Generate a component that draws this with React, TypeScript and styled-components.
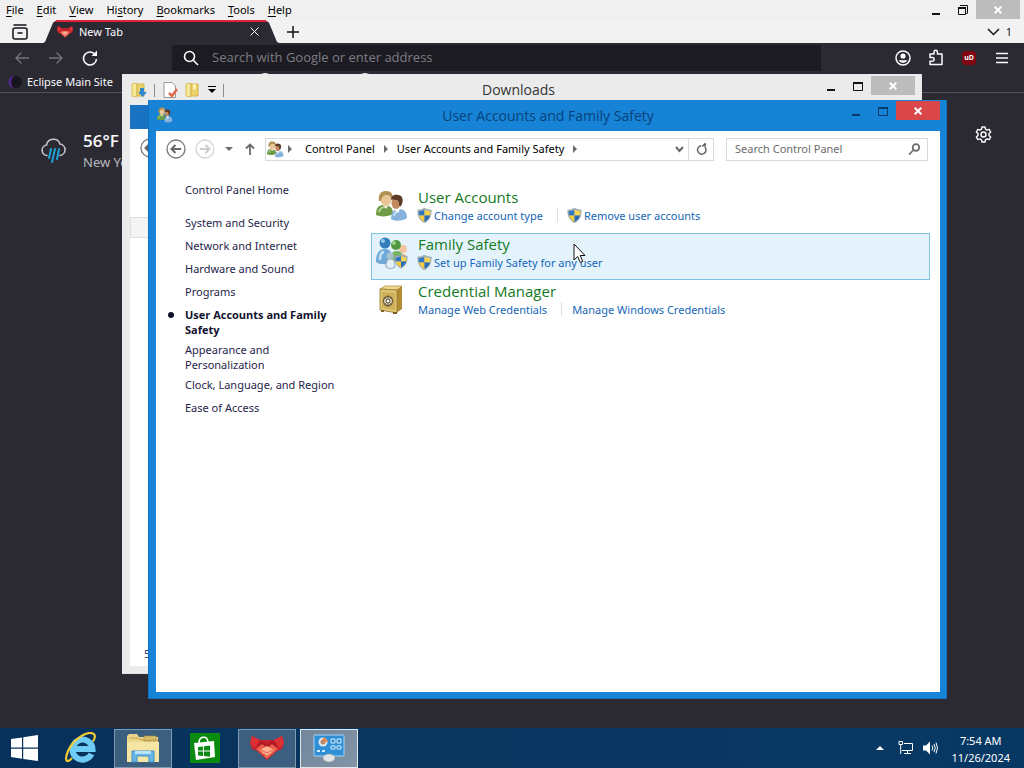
import React from "react";
import styled, { createGlobalStyle, css } from "styled-components";

const uiFont = `"Noto Sans", "Open Sans", sans-serif`;
const headingFont = `"Open Sans", "Noto Sans", sans-serif`;

const GlobalStyle = createGlobalStyle`
  * { box-sizing: border-box; }
  html, body { margin: 0; padding: 0; overflow: hidden; }
  body { font-family: ${uiFont}; font-size: 11px; line-height: 15px; color: #000; }
  button, input { font: inherit; color: inherit; background: none; border: 0; padding: 0; margin: 0; }
  ul { list-style: none; margin: 0; padding: 0; }
  h1, h2, p { margin: 0; font-weight: 400; }
  h1, h2 { font-family: ${headingFont}; }
  a { text-decoration: none; color: inherit; }
  svg { display: block; flex: none; }
`;

const Desktop = styled.div`
  position: relative;
  display: flex;
  flex-direction: column;
  height: 100vh;
  overflow: hidden;
  background: #2b2a33;
`;

/* ---------- shared ---------- */
const IconButton = styled.button<{ $w?: number; $color?: string }>`
  display: flex;
  align-items: center;
  justify-content: center;
  flex: none;
  width: ${(p) => p.$w ?? 20}px;
  height: 20px;
  color: ${(p) => p.$color ?? "inherit"};
`;

const Controls = styled.div`
  display: flex;
  justify-content: flex-end;
  height: 20px;
`;

const CloseButton = styled(IconButton)<{ $bg: string }>`
  width: 44px;
  height: 19px;
  color: #fff;
  background: ${(p) => p.$bg};
`;

function WindowControls({ color, closeBg, restore }: { color: string; closeBg: string; restore?: boolean }) {
  return (
    <Controls>
      <IconButton $w={27} $color={color} aria-label="Minimize">
        <svg width="8" height="14"><path d="M0 10h8v2H0z" fill="currentColor" /></svg>
      </IconButton>
      <IconButton $w={27} $color={color} aria-label={restore ? "Restore" : "Maximize"}>
        {restore ? (
          <svg width="12" height="12" fill="none" stroke="currentColor">
            <path d="M1.500 4v6.500h7V4M10.500 9V1.500H3M9 9.500h1.500" /><path d="M1 4h8" strokeWidth="2" />
          </svg>
        ) : (
          <svg width="10" height="9" fill="none" stroke="currentColor"><path d="M.5 1v7.500h9V1" /><path d="M0 1h10" strokeWidth="2" /></svg>
        )}
      </IconButton>
      <CloseButton $bg={closeBg} aria-label="Close">
        <svg width="8" height="8" stroke="currentColor" strokeWidth="2"><path d="M.7.7l6.600 6.600M7.300.7L.7 7.300" /></svg>
      </CloseButton>
    </Controls>
  );
}

/* ---------- browser ---------- */
const Browser = styled.main`
  flex: 1;
  display: flex;
  flex-direction: column;
  min-height: 0;
  color: #fbfbfe;
`;

const MenuBar = styled.header`
  display: flex;
  justify-content: space-between;
  height: 20px;
  padding-right: 4px;
  background: #f0f0f0;
  color: #000;
`;

const Menus = styled.nav`
  display: flex;
  align-items: center;
  gap: 13px;
  padding: 0 0 2px 6px;
  u { text-underline-offset: 2px; }
`;

const TabStrip = styled.div`
  display: flex;
  align-items: center;
  height: 23px;
  padding: 0 12px 0 10px;
  background: #f2f2f3;
  color: #15141a;
`;

const Tab = styled.div`
  display: flex;
  align-items: center;
  width: 236px;
  height: 23px;
  margin: 0 4px 0 13px;
  padding: 0 15px 2px 14px;
  border-top: 2px solid #e0243f;
  background: #2b2a33;
  color: #fbfbfe;
  clip-path: polygon(0 100%, 2px 96%, 10px 12%, 14px 0, 222px 0, 226px 12%, 234px 96%, 100% 100%);
  span { flex: 1; padding-left: 6px; }
`;

const Spacer = styled.div`
  flex: 1;
`;

const TabCount = styled.button`
  display: flex;
  align-items: center;
  gap: 6px;
`;

const NavBar = styled.div`
  display: flex;
  align-items: center;
  height: 29px;
  padding: 0 12px;
  background: #2b2a33;
`;

const NavGroup = styled.div<{ $gap: number }>`
  display: flex;
  align-items: center;
  gap: ${(p) => p.$gap}px;
`;

const UrlBar = styled.label`
  flex: 1;
  display: flex;
  align-items: center;
  gap: 13px;
  height: 26px;
  margin: 0 72px;
  padding: 0 11px;
  background: #1c1b22;
  input { flex: 1; min-width: 0; font-family: ${headingFont}; font-size: 13px; outline: 0; }
  input::placeholder { color: #7d7c84; opacity: 1; }
`;

const ExtensionBadge = styled.span`
  display: grid;
  place-items: center;
  width: 14px;
  height: 14px;
  border-radius: 4px;
  background: #800610;
  font-size: 7px;
  line-height: 8px;
  font-weight: 700;
`;

const BookmarksBar = styled.div`
  display: flex;
  align-items: center;
  gap: 82px;
  height: 21px;
  padding-left: 7px;
  border-bottom: 1px solid #55545c;
  a { display: flex; align-items: center; gap: 4px; width: 167px; padding-bottom: 1px; }
`;

const Favicon = styled.span`
  width: 18px;
  height: 18px;
  border-radius: 50%;
  background: #fbfbfe;
`;

const NewTabPage = styled.section`
  display: flex;
  align-items: flex-start;
  justify-content: space-between;
  padding: 31px 32px 0 40px;
`;

const Weather = styled.div`
  display: flex;
  align-items: center;
  gap: 16px;
  height: 53px;
  strong { display: block; font-family: ${headingFont}; font-size: 17px; line-height: 22px; font-weight: 600; }
  p { font-size: 13px; line-height: 20px; color: #b8b8bf; white-space: nowrap; }
`;

/* ---------- windows ---------- */
const DownloadsWindow = styled.section`
  position: absolute;
  top: 74px;
  right: 102px;
  bottom: 94px;
  left: 122px;
  display: flex;
  flex-direction: column;
  padding: 2px 6px 7px 8px;
  background: #ebebeb;
  border: 1px solid #e2e2e4;
  border-width: 0 1px 1px 0;
`;

const TitleRow = styled.header<{ $h: number }>`
  display: grid;
  grid-template-columns: 1fr auto 1fr;
  height: ${(p) => p.$h}px;
  flex: none;
  h1 { font-size: 14px; line-height: 28px; color: #333; padding-right: 8px; }
`;

const QuickAccess = styled.div`
  display: flex;
  align-items: center;
  height: 28px;
  gap: 7px;
  padding-left: 1px;
`;

const Divider = styled.span<{ $h: number; $color: string }>`
  flex: none;
  width: 1px;
  height: ${(p) => p.$h}px;
  background: ${(p) => p.$color};
`;

const Ribbon = styled.div`
  height: 24px;
  flex: none;
  background: #1a72c2;
`;

const DownloadsBody = styled.div`
  flex: 1;
  display: flex;
  flex-direction: column;
  padding-top: 9px;
  background: #fff;
`;

const BackRow = styled.div`
  padding-left: 10px;
  height: 79px;
`;

const ColumnStub = styled.div`
  height: 21px;
  border: 1px solid #ddd;
  background: #f4f4f4;
`;

const StatusLine = styled.p`
  margin-top: auto;
  padding: 0 0 5px 14px;
  color: #1d3c66;
`;

const PanelWindow = styled.section`
  position: absolute;
  top: 100px;
  right: 77px;
  bottom: 69px;
  left: 148px;
  display: flex;
  flex-direction: column;
  padding: 1px 6px 6px 7px;
  background: #1783d6;
  border: 1px solid #1173bf;
  border-top: 0;
`;

const PanelTitle = styled(TitleRow)`
  h1 { line-height: 30px; color: #08427a; padding: 0; }
`;

const TitleIcon = styled.div`
  padding: 6px 0 0 1px;
`;

const PanelBody = styled.div`
  flex: 1;
  display: flex;
  flex-direction: column;
  background: #fff;
`;

const AddressRow = styled.nav`
  display: flex;
  align-items: center;
  height: 36px;
  padding: 0 12px 0 9px;
  color: #6b6b6b;
`;

const fieldBox = css`
  display: flex;
  align-items: center;
  height: 23px;
  border: 1px solid #d9d9d9;
`;

const Address = styled.div`
  ${fieldBox}
  flex: 1;
  margin-right: 12px;
  padding-left: 1px;
  color: #000;
`;

const Crumb = styled.button`
  padding: 0 9px 1px;
  white-space: nowrap;
`;

const SearchField = styled.label`
  ${fieldBox}
  width: 202px;
  padding: 0 6px 0 8px;
  input { flex: 1; min-width: 0; padding-bottom: 1px; outline: 0; }
  input::placeholder { color: #6d6d6d; opacity: 1; }
`;

const Columns = styled.div`
  display: flex;
  flex: 1;
  padding: 15px 10px 0 11px;
`;

const Sidebar = styled.aside`
  flex: none;
  width: 204px;
  padding-left: 18px;
  color: #1e1e4b;
  > a { display: block; margin-bottom: 17px; }
  ul { display: flex; flex-direction: column; gap: 3px; width: 160px; }
`;

const SideItem = styled.li<{ $active?: boolean; $narrow?: boolean }>`
  min-height: 20px;
  padding: 1px 0;
  padding-right: ${(p) => (p.$narrow ? 40 : 0)}px;
  ${(p) =>
    p.$active &&
    css`
      display: flex;
      margin-left: -18px;
      font-family: ${headingFont};
      font-weight: 700;
      color: #11112e;
      &::before {
        content: "";
        flex: none;
        width: 6px;
        height: 6px;
        margin: 5px 11px 0 1px;
        border-radius: 50%;
        background: #11112e;
      }
    `}
`;

const Categories = styled.ul`
  flex: 1;
  padding-top: 4px;
`;

const Category = styled.li<{ $hover?: boolean }>`
  display: flex;
  gap: 10px;
  height: 47px;
  padding: 1px 4px;
  border: 1px solid ${(p) => (p.$hover ? "#7cc3e6" : "transparent")};
  background: ${(p) => (p.$hover ? "#e4f3fb" : "none")};
  > svg { margin-top: 2px; }
  h2 { font-size: 15px; line-height: 18px; color: #147a1c; }
`;

const Links = styled.div`
  display: flex;
  align-items: center;
  height: 18px;
  color: #1566b8;
  a { display: flex; align-items: center; gap: 2px; white-space: nowrap; }
  a > svg { margin-left: -1px; }
`;

const LinkDivider = styled(Divider)`
  margin: 0 10px 0 14px;
`;

const Pointer = styled.div`
  position: absolute;
  top: 243px;
  left: 573px;
  pointer-events: none;
`;

/* ---------- taskbar ---------- */
const Taskbar = styled.footer`
  display: flex;
  flex: none;
  align-items: center;
  gap: 4px;
  height: 40px;
  padding-right: 14px;
  background: linear-gradient(90deg, #07305a, #0a3761 50%, #073864);
  color: #fff;
`;

const TaskButton = styled.button<{ $state?: "open" | "active"; $start?: boolean }>`
  display: grid;
  place-items: center;
  width: ${(p) => (p.$start ? 48 : 58)}px;
  height: 39px;
  border: 1px solid transparent;
  ${(p) => p.$state === "open" && "background:#3c5f80;border-color:#8199ae;"}
  ${(p) => p.$state === "active" && "background:linear-gradient(135deg,#72869b,#8294a6);border-color:#e0e7ed;"}
`;

const Clock = styled.div`
  margin-left: 7px;
  padding-top: 1px;
  text-align: center;
  line-height: 17px;
`;

/* ---------- icons ---------- */
const Shield = () => (
  <svg width="15" height="15" viewBox="0 0 15 15">
    <path d="M7.500 0C5.500 1.500 3 2 .8 2c0 6 1.500 10 6.700 13 5.200-3 6.700-7 6.700-13-2.200 0-4.700-.5-6.700-2z" fill="#a8b5bc" stroke="#8c9aa3" strokeWidth=".6" />
    <path d="M7.500 1.500V7.500H2C1.800 6 1.700 4.500 1.800 3.200 4 3 6 2.500 7.500 1.500z" fill="#2f75c2" />
    <path d="M7.500 1.500V7.500H13c.2-1.500.3-3 .2-4.300C11 3 9 2.500 7.500 1.500z" fill="#f6d44c" />
    <path d="M2 7.500h5.500v6.300C4.300 12 2.600 10 2 7.500z" fill="#f4cb3c" />
    <path d="M13 7.500H7.500v6.300C10.700 12 12.400 10 13 7.500z" fill="#286bb6" />
  </svg>
);

const Users = ({ size = 32 }: { size?: number }) => (
  <svg width={size} height={size} viewBox="0 0 32 32">
    <path d="M0 25c0-8 3-10 8-10s9 2 9 9c-5 3-13 3-17 1z" fill="#6f9b46" />
    <path d="M3 22c1-4 3-5 6-5" fill="none" stroke="#b4cf92" strokeWidth="2" />
    <path d="M7 15l3 4 3-4z" fill="#f3ead6" />
    <ellipse cx="10" cy="9" rx="5.500" ry="7" fill="#e8c697" />
    <path d="M3 11C2 4 5 1 10 1s8 3 6 9c-1-3-2-5-5-5S6 6 5 11z" fill="#b28f52" />
    <path d="M15 29c0-7 3-10 8-10s8 3 8 9c-4 3-12 4-16 1z" fill="#86b3dd" />
    <path d="M18 26c1-4 3-5 5-5" fill="none" stroke="#c4def3" strokeWidth="2" />
    <ellipse cx="20" cy="13" rx="4.500" ry="6" fill="#c48a5f" />
    <path d="M15 10c0-5 4-6 7-5 5 0 6 6 3 11-1 1-2 0-2-2 0-3-1-4-3-4s-4-1-5 0z" fill="#5c3b2a" />
    <path d="M18 19l4 4 2-4" fill="#fff" />
  </svg>
);

const Family = () => (
  <svg width="32" height="32" viewBox="0 0 32 32">
    <circle cx="27" cy="12" r="4" fill="#f5c5a0" /><path d="M22 27c0-7 1-10 5-10s4 4 4 8z" fill="#f3b486" />
    <circle cx="20" cy="8" r="5" fill="#4f9a3f" /><path d="M14 25c0-8 2-11 7-11s6 4 6 9z" fill="#7ab364" />
    <circle cx="18" cy="6" r="2" fill="#9dd089" />
    <circle cx="9" cy="6" r="5.500" fill="#347ebd" /><path d="M0 25c0-9 3-13 9-13s7 4 7 13c-4 3-12 3-16 0z" fill="#6fa9da" />
    <circle cx="7" cy="4" r="2" fill="#93c8ef" /><path d="M4 23c0-5 1-8 4-8" fill="none" stroke="#c2e0f6" strokeWidth="2.500" />
    <circle cx="14" cy="19" r="3.500" fill="#a9c0d0" /><path d="M10 30c0-6 1-8 4.500-8s4.500 2 4.500 8c-3 2-6 2-9 0z" fill="#e3ecf2" stroke="#8ba5b7" />
    <svg x="18" y="17" width="14" height="15" viewBox="0 0 15 15"><Shield /></svg>
  </svg>
);

const Safe = () => (
  <svg width="32" height="32" viewBox="0 0 32 32">
    <path d="M4 5l5-3h17l-4 4z" fill="#efd98a" stroke="#a78a3a" strokeWidth=".7" />
    <path d="M20 6l6-4v23l-6 4z" fill="#b08d35" />
    <path d="M4 5l17 1v23L4 26z" fill="#dfc673" stroke="#94772f" strokeWidth=".8" />
    <path d="M6 8l13 1v17L6 24z" fill="#cfb05a" />
    <circle cx="12" cy="17" r="4.500" fill="#e6dfc9" stroke="#6b5a38" strokeWidth="1.300" />
    <path d="M8 13l8 8M16 13l-8 8M12 11v12" stroke="#6b5a38" strokeWidth=".8" /><circle cx="12" cy="17" r="2" fill="#fff" stroke="#57482a" />
    <path d="M5 26v2h3v-2M17 28v2h4v-2" fill="#7a6226" />
  </svg>
);

const Fox = ({ w, h }: { w: number; h: number }) => (
  <svg width={w} height={h} viewBox="0 0 34 24">
    <path d="M2 0l8 4h14l8-4 2 7-2 6-5 2-10 9-10-9-5-2-2-6z" fill="#c8202c" />
    <path d="M2 0l8 4-6 8-4-5zM32 0l-8 4 6 8 4-5z" fill="#dc3034" />
    <path d="M10 4l7 4 7-4 3 8-10 4-10-4z" fill="#b01b27" />
    <path d="M6 13l6-5 5 4 5-4 6 5-11 10z" fill="#ea5f4c" />
    <path d="M10 14l7-4 7 4-7 7z" fill="#ffb292" /><path d="M11 14l6 3 6-3M14 18l3 2 3-2" fill="none" stroke="#e2604f" />
  </svg>
);

const Folder = ({ kind }: { kind?: "down" }) => (
  <svg width="16" height="16" viewBox="0 0 16 16">
    <path d="M1 2l5-1v14l-5-1z" fill="#f7e99a" stroke="#d9c05c" /><path d="M6 2h7v12H6z" fill="#ecd068" stroke="#d0b24a" />
    {kind ? <path d="M9 6h4v4h3l-4.500 5L7 10h2z" fill="#2f87cf" /> : <path d="M8 2v6l3-1V2z" fill="#fbf0b4" />}
  </svg>
);

const CircleArrow = ({ flip, color, ring }: { flip?: boolean; color: string; ring: string }) => (
  <svg width="20" height="20" viewBox="0 0 20 20" fill="none">
    <circle cx="10" cy="10" r="9" stroke={ring} strokeWidth="1.300" />
    <path d={flip ? "M5 10h9M10.500 6l4 4-4 4" : "M15 10H6M9.500 6l-4 4 4 4"} stroke={color} strokeWidth="2" />
  </svg>
);

const Chevron = () => (
  <svg width="4" height="8"><path d="M0 0l4 4-4 4z" fill="#6b6b6b" /></svg>
);

const menus: [string, string, string][] = [
  ["", "F", "ile"], ["", "E", "dit"], ["", "V", "iew"], ["Hi", "s", "tory"], ["", "B", "ookmarks"], ["", "T", "ools"], ["", "H", "elp"],
];

const sideItems = [
  "System and Security", "Network and Internet", "Hardware and Sound", "Programs", "User Accounts and Family Safety",
  "Appearance and Personalization", "Clock, Language, and Region", "Ease of Access",
];

const categories = [
  { name: "User Accounts", icon: <Users />, links: ["Change account type", "Remove user accounts"], shield: true },
  { name: "Family Safety", icon: <Family />, links: ["Set up Family Safety for any user"], shield: true, hover: true },
  { name: "Credential Manager", icon: <Safe />, links: ["Manage Web Credentials", "Manage Windows Credentials"] },
];

export default function App() {
  return (
    <Desktop>
      <GlobalStyle />
      <Browser>
        <MenuBar>
          <Menus>
            {menus.map(([a, k, b]) => (
              <button key={k + b}>{a}<u>{k}</u>{b}</button>
            ))}
          </Menus>
          <WindowControls color="#111" closeBg="#bcbcbc" restore />
        </MenuBar>
        <TabStrip>
          <IconButton aria-label="Recent browsing">
            <svg width="16" height="16" viewBox="0 0 16 16" fill="none" stroke="currentColor" strokeWidth="1.500" strokeLinecap="round">
              <path d="M2 1h12M6 9h4" /><rect x="1" y="4" width="14" height="11" rx="2" />
            </svg>
          </IconButton>
          <Tab>
            <Fox w={16} h={12} />
            <span>New Tab</span>
            <IconButton aria-label="Close tab">
              <svg width="9" height="9" stroke="currentColor"><path d="M.5.5l8 8M8.500.5l-8 8" /></svg>
            </IconButton>
          </Tab>
          <IconButton aria-label="New tab">
            <svg width="12" height="12" stroke="currentColor" strokeWidth="1.500"><path d="M6 0v12M0 6h12" /></svg>
          </IconButton>
          <Spacer />
          <TabCount aria-label="List all tabs">
            <svg width="13" height="8" fill="none" stroke="currentColor" strokeWidth="1.500"><path d="M1 1l5.500 5.500L12 1" /></svg>
            1
          </TabCount>
        </TabStrip>
        <NavBar>
          <NavGroup $gap={14}>
            <IconButton $color="#75747b" aria-label="Back">
              <svg width="14" height="12" fill="none" stroke="currentColor" strokeWidth="1.300"><path d="M14 6H1M6.500.5L1 6l5.500 5.500" /></svg>
            </IconButton>
            <IconButton $color="#75747b" aria-label="Forward">
              <svg width="14" height="12" fill="none" stroke="currentColor" strokeWidth="1.300"><path d="M0 6h13M7.500.5L13 6l-5.500 5.500" /></svg>
            </IconButton>
            <IconButton aria-label="Reload">
              <svg width="16" height="16" viewBox="0 0 16 16" fill="none" stroke="currentColor" strokeWidth="1.600"><path d="M13.500 5A6.500 6.500 0 1 0 14.500 9" /><path d="M15 .5V6H9.500z" fill="currentColor" stroke="none" /></svg>
            </IconButton>
          </NavGroup>
          <UrlBar>
            <svg width="16" height="16" viewBox="0 0 16 16" fill="none" stroke="currentColor" strokeWidth="1.600"><circle cx="6.500" cy="6.500" r="5" /><path d="M10.300 10.300L15 15" /></svg>
            <input aria-label="Address" placeholder="Search with Google or enter address" />
          </UrlBar>
          <NavGroup $gap={13}>
            <IconButton aria-label="Account">
              <svg width="16" height="16" viewBox="0 0 16 16"><circle cx="8" cy="8" r="7" fill="none" stroke="currentColor" strokeWidth="1.500" /><circle cx="8" cy="6" r="2.600" fill="currentColor" /><path d="M3.500 10.300h9A5 5 0 0 1 8 13a5 5 0 0 1-4.500-2.700z" fill="currentColor" /></svg>
            </IconButton>
            <IconButton aria-label="Extensions">
              <svg width="16" height="17" viewBox="0 0 16 17" fill="none" stroke="currentColor" strokeWidth="1.500" strokeLinejoin="round"><path d="M2 5h4V3a1.700 1.700 0 0 1 3.400 0v2H14v10.500H2v-3.300h2.300a1.800 1.800 0 0 0 0-3.600H2z" /></svg>
            </IconButton>
            <IconButton aria-label="uBlock Origin"><ExtensionBadge>uD</ExtensionBadge></IconButton>
            <IconButton aria-label="Menu">
              <svg width="12" height="12" stroke="currentColor" strokeWidth="1.500"><path d="M0 1.500h12M0 6h12M0 10.500h12" /></svg>
            </IconButton>
          </NavGroup>
        </NavBar>
        <BookmarksBar>
          <a href="#eclipse">
            <svg width="16" height="16" viewBox="0 0 16 16"><circle cx="9" cy="8" r="6" fill="#17131f" /><path d="M6 2a6.500 6.500 0 0 0 0 12A9 9 0 0 1 6 2z" fill="#6b2fa5" stroke="#4a2384" /></svg>
            Eclipse Main Site
          </a>
          <Favicon /><Favicon />
        </BookmarksBar>
        <NewTabPage>
          <Weather>
            <svg width="27" height="26" viewBox="0 0 27 26" fill="none" strokeLinecap="round">
              <path d="M7 17.500a5.300 5.300 0 0 1-.5-10.500 7 7 0 0 1 13.500-1 5.800 5.800 0 0 1 0 11.500" stroke="#c3c3ca" strokeWidth="1.600" />
              <path d="M11 11l-2 9M15 11l-3 13M19 11l-2 10" stroke="#1ba4d8" strokeWidth="2" />
            </svg>
            <div>
              <strong>56°F</strong>
              <p>New York</p>
            </div>
          </Weather>
          <IconButton $w={18} aria-label="Personalize new tab">
            <svg width="17" height="17" viewBox="0 0 17 17" fill="none" stroke="currentColor" strokeWidth="1.400" strokeLinejoin="round">
              <path d="M7 1h3l.5 2.200 1.500.9 2.200-.7 1.500 2.600L14 7.600v1.800l1.700 1.600-1.500 2.600-2.200-.7-1.500.9L10 16H7l-.5-2.200-1.500-.9-2.200.7L1.300 11 3 9.400V7.600L1.300 6l1.500-2.600 2.200.7 1.500-.9z" /><circle cx="8.500" cy="8.500" r="2.500" />
            </svg>
          </IconButton>
        </NewTabPage>
      </Browser>

      <DownloadsWindow aria-label="Downloads">
        <TitleRow $h={29}>
          <QuickAccess>
            <Folder kind="down" />
            <Divider $h={13} $color="#8c8c8c" />
            <svg width="16" height="16" viewBox="0 0 16 16"><path d="M2 .5h8l3.500 3.500v11.500H2z" fill="#fff" stroke="#999" /><path d="M7 11l3 3 5-7" fill="none" stroke="#e2694e" strokeWidth="2.500" /></svg>
            <Folder />
            <svg width="8" height="8"><path d="M0 0h8v1H0zM0 3h8L4 7z" /></svg>
            <Divider $h={13} $color="#8c8c8c" />
          </QuickAccess>
          <h1>Downloads</h1>
          <WindowControls color="#111" closeBg="#bcbcbc" />
        </TitleRow>
        <Ribbon />
        <DownloadsBody>
          <BackRow><CircleArrow color="#666" ring="#777" /></BackRow>
          <ColumnStub />
          <StatusLine>5 items</StatusLine>
        </DownloadsBody>
      </DownloadsWindow>

      <PanelWindow aria-label="Control Panel">
        <PanelTitle $h={30}>
          <TitleIcon><Users size={16} /></TitleIcon>
          <h1>User Accounts and Family Safety</h1>
          <WindowControls color="#083a6b" closeBg="#d9474b" />
        </PanelTitle>
        <PanelBody>
          <AddressRow>
            <IconButton $w={22} aria-label="Back"><CircleArrow color="#666" ring="#777" /></IconButton>
            <IconButton $w={36} aria-label="Forward"><CircleArrow flip color="#ccc" ring="#d4d4d4" /></IconButton>
            <IconButton $w={12} aria-label="Recent locations"><svg width="8" height="4"><path d="M0 0h8L4 4z" fill="currentColor" /></svg></IconButton>
            <IconButton $w={30} aria-label="Up">
              <svg width="10" height="12" fill="none" stroke="currentColor" strokeWidth="1.800"><path d="M5 12V1.500M1 5.500l4-4 4 4" /></svg>
            </IconButton>
            <Address>
              <Users size={17} />
              <IconButton $w={12} aria-label="Locations"><Chevron /></IconButton>
              <Crumb>Control Panel</Crumb>
              <Chevron />
              <Crumb>User Accounts and Family Safety</Crumb>
              <Chevron />
              <Spacer />
              <IconButton $w={18} $color="#666" aria-label="Address history">
                <svg width="9" height="7" fill="none" stroke="currentColor" strokeWidth="2"><path d="M1 1l3.500 4L8 1" /></svg>
              </IconButton>
              <Divider $h={21} $color="#ddd" />
              <IconButton $w={24} $color="#666" aria-label="Refresh">
                <svg width="11" height="12" fill="none" stroke="currentColor" strokeWidth="1.500"><path d="M8.800 4A4.200 4.200 0 1 1 5 2.800" /><path d="M5 3.500h5V-1z" fill="currentColor" stroke="none" /></svg>
              </IconButton>
            </Address>
            <SearchField>
              <input aria-label="Search Control Panel" placeholder="Search Control Panel" />
              <svg width="13" height="12" fill="none" stroke="currentColor" strokeWidth="1.700"><circle cx="8" cy="4.500" r="3.300" /><path d="M5.500 7L1 11.500" /></svg>
            </SearchField>
          </AddressRow>
          <Columns>
            <Sidebar>
              <a href="#home">Control Panel Home</a>
              <ul>
                {sideItems.map((item, i) => (
                  <SideItem key={item} $active={i === 4} $narrow={i === 5}><a href={"#section-" + i}>{item}</a></SideItem>
                ))}
              </ul>
            </Sidebar>
            <Categories>
              {categories.map((c) => (
                <Category key={c.name} $hover={c.hover}>
                  {c.icon}
                  <div>
                    <h2><a href="#category">{c.name}</a></h2>
                    <Links>
                      {c.links.map((l, i) => (
                        <React.Fragment key={l}>
                          {i > 0 && <LinkDivider $h={14} $color="#ddd" />}
                          <a href="#task">{c.shield && <Shield />}{l}</a>
                        </React.Fragment>
                      ))}
                    </Links>
                  </div>
                </Category>
              ))}
            </Categories>
          </Columns>
        </PanelBody>
      </PanelWindow>

      <Taskbar>
        <TaskButton $start aria-label="Start">
          <svg width="27" height="26" viewBox="0 0 27 26" fill="#fff"><path d="M0 4l11-1.600V12.500H0zM12.200 2.200L27 0v12.500H12.200zM0 13.700h11v10L0 22zM12.200 13.700H27V26l-14.800-2.100z" /></svg>
        </TaskButton>
        <TaskButton aria-label="Internet Explorer">
          <svg width="32" height="32" viewBox="0 0 32 32" fill="none">
            <path d="M26.500 22a10 10 0 1 1 1-5H10" stroke="#6fcdf5" strokeWidth="6" />
            <path d="M7 26C2 32-1 29 3 19 8 8 21-1 28 1.500c3 1 2 5 0 8" stroke="#f2cc35" strokeWidth="2.200" />
          </svg>
        </TaskButton>
        <TaskButton $state="open" aria-label="File Explorer">
          <svg width="34" height="30" viewBox="0 0 34 30">
            <path d="M1 3l2-2h8l2 3h19v25H1z" fill="#ecd58a" /><path d="M3 5h10l2 2h17M18 3h12v5H18z" fill="#d6bd6c" stroke="#a88935" strokeWidth=".6" />
            <path d="M1 9h32v20H1z" fill="#f6e6a6" /><path d="M6 29V18h22v11h-5v-6H11v6z" fill="#68b6e6" stroke="#3c8fc9" /><path d="M9 18h16v3H9z" fill="#b9e1f8" />
          </svg>
        </TaskButton>
        <TaskButton aria-label="Store">
          <svg width="30" height="30" viewBox="0 0 30 30">
            <path d="M0 0h30v30H0z" fill="#0a8a0e" /><path d="M4 10l20-2 1 16-19 3z" fill="#fff" />
            <path d="M9 10c0-7 8-8 9-1" fill="none" stroke="#fff" strokeWidth="1.500" />
            <path d="M8 14l5-.6v4.100H8zM14 13.300l6-.8V17.500h-6zM8 18.500h5v4.500l-5-.6zM14 18.500h6v5.300l-6-.8z" fill="#0a8a0e" />
          </svg>
        </TaskButton>
        <TaskButton $state="open" aria-label="Browser"><Fox w={34} h={24} /></TaskButton>
        <TaskButton $state="active" aria-label="Control Panel">
          <svg width="32" height="28" viewBox="0 0 32 28">
            <rect x="1" y="1" width="30" height="21" rx="1" fill="#2f8fd6" stroke="#a5d5f5" />
            <circle cx="10" cy="8" r="4.500" fill="#dcebf5" /><circle cx="10" cy="8" r="2.500" fill="#b58a6a" /><path d="M10 8V3.500a4.500 4.500 0 0 1 4.500 4.500z" fill="#e2894a" />
            <path d="M18 5h4v4h-4zM24 5h4v4h-4zM18 12h4v3h-4zM24 12h4v3h-4z" fill="none" stroke="#d4ecfb" /><path d="M4 16h3v2H4zM9 16h3v2H9z" fill="#d4ecfb" />
            <ellipse cx="16" cy="24" rx="6" ry="4" fill="#dfe3e6" stroke="#999" strokeWidth=".5" />
          </svg>
        </TaskButton>
        <Spacer />
        <IconButton aria-label="Show hidden icons"><svg width="8" height="4"><path d="M0 4h8L4 0z" fill="#fff" /></svg></IconButton>
        <IconButton $w={22} aria-label="Network">
          <svg width="15" height="14" fill="none" stroke="#fff"><path d="M6 2.500h8.500v7H4M9.500 10v2.500M6 12.500h7M1 .5h3.500v3H1zM2.700 4v9" /></svg>
        </IconButton>
        <IconButton aria-label="Volume">
          <svg width="15" height="14" fill="none" stroke="#fff"><path d="M0 4.500h3l4-4v13l-4-4H0z" fill="#fff" stroke="none" /><path d="M9 4.500q1.500 2.500 0 5M11 3q2.500 4 0 8M13 1.500q3 5.500 0 11" /></svg>
        </IconButton>
        <Clock><time>7:54 AM<br />11/26/2024</time></Clock>
      </Taskbar>

      <Pointer>
        <svg width="13" height="21" viewBox="0 0 13 21"><path d="M1 1v16l3.700-3.500 2.500 6 2.500-1-2.500-6H12z" fill="#fff" stroke="#111" /></svg>
      </Pointer>
    </Desktop>
  );
}
